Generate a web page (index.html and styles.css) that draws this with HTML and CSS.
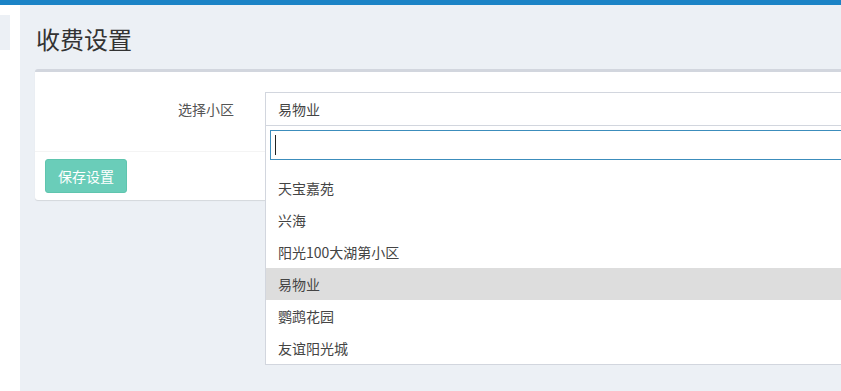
FILE: index.html
```html
<!DOCTYPE html>
<html lang="zh-CN">
<head>
  <meta charset="UTF-8">
  <meta name="viewport" content="width=device-width, initial-scale=1.0">
  <title>收费设置</title>
  <link rel="stylesheet" href="styles.css">
</head>
<body>
  <div class="top-bar"></div>
  <div class="layout">
    <aside class="sidebar">
      <div class="sidebar-tab"></div>
    </aside>

    <main class="content">
      <h1 class="page-title">收费设置</h1>

      <div class="box">
        <div class="box-body">
          <div class="form-row">
            <label class="form-label">选择小区</label>
            <div class="select-wrap">
              <div class="select-box">易物业</div>

              <div class="dropdown">
                <div class="dropdown-search">
                  <div class="search-input"><span class="caret"></span></div>
                </div>
                <ul class="results">
                  <li>天宝嘉苑</li>
                  <li>兴海</li>
                  <li>阳光100大湖第小区</li>
                  <li class="active">易物业</li>
                  <li>鹦鹉花园</li>
                  <li>友谊阳光城</li>
                </ul>
              </div>
            </div>
          </div>
        </div>

        <div class="box-footer">
          <button class="btn-save" type="button">保存设置</button>
        </div>
      </div>
    </main>
  </div>
</body>
</html>
```

FILE: styles.css
```css
body {
  font-family: "Noto Sans CJK SC", "Liberation Sans", sans-serif;
  margin: 0;
  padding: 0;
  background-color: #ecf0f5;
  color: #333333;
  overflow: hidden;
  height: 391px;
}

.top-bar {
  height: 5px;
  background-color: #1b83c6;
}

.layout {
  display: flex;
  height: 386px;
}

.sidebar {
  width: 20px;
  flex-shrink: 0;
  background-color: #ffffff;
  padding-top: 10px;
  box-sizing: border-box;
}

.sidebar-tab {
  width: 10px;
  height: 35px;
  background-color: #ecf0f5;
}

.content {
  flex: 1;
  padding: 20px 0 0 15px;
  min-width: 0;
}

.page-title {
  font-size: 24px;
  font-weight: 400;
  line-height: 28px;
  margin: 0 0 16px 1px;
  color: #333333;
}

.box {
  width: 1000px;
  background-color: #ffffff;
  border-top: 3px solid #d2d6de;
  border-radius: 3px 0 0 3px;
  box-shadow: 0 1px 1px rgba(0, 0, 0, 0.1);
}

.box-body {
  padding: 20px 10px 25px;
}

.form-row {
  display: flex;
  align-items: center;
}

.form-label {
  width: 189px;
  text-align: right;
  font-size: 14px;
  color: #555555;
  margin-right: 31px;
}

.select-wrap {
  flex: 1;
  position: relative;
}

.select-box {
  height: 34px;
  box-sizing: border-box;
  border: 1px solid #d2d6de;
  padding: 0 12px;
  line-height: 32px;
  font-size: 14px;
  color: #444444;
}

.dropdown {
  position: absolute;
  top: 33px;
  left: 0;
  right: 0;
  z-index: 10;
  background-color: #ffffff;
  border: 1px solid #d2d6de;
}

.dropdown-search {
  padding: 4px 4px 0;
}

.search-input {
  height: 30px;
  box-sizing: border-box;
  border: 1px solid #3c8dbc;
  padding: 4px 4px;
}

.caret {
  display: block;
  width: 1px;
  height: 20px;
  background-color: #222222;
}

.results {
  list-style: none;
  margin: 12px 0 0;
  padding: 0;
}

.results li {
  height: 32px;
  line-height: 32px;
  padding: 0 12px;
  font-size: 14px;
  color: #444444;
}

.results li.active {
  background-color: #dddddd;
}

.box-footer {
  border-top: 1px solid #f4f4f4;
  padding: 7px 10px;
}

.btn-save {
  width: 82px;
  height: 34px;
  border: 1px solid #5fc5ae;
  border-radius: 3px;
  background-color: #6acdb9;
  color: #ffffff;
  font-family: inherit;
  font-size: 14px;
  padding: 0;
}
```
